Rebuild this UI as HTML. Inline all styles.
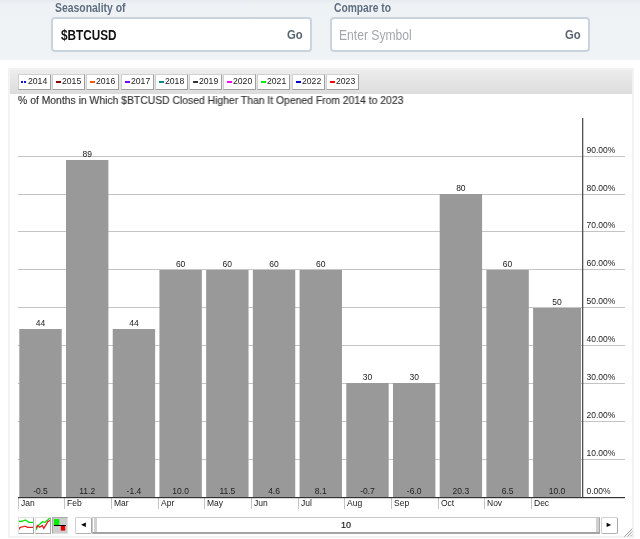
<!DOCTYPE html>
<html><head><meta charset="utf-8">
<style>
html,body{margin:0;padding:0;}
body{width:640px;height:539px;position:relative;overflow:hidden;background:#fff;font-family:"Liberation Sans",sans-serif;}
.t{position:absolute;line-height:1;white-space:nowrap;transform-origin:0 0;}
.top{position:absolute;left:0;top:0;width:640px;height:60px;background:linear-gradient(#e6eaee 0px,#eef2f5 4px,#eff3f6 60px);}
.box{position:absolute;top:17px;height:31px;background:#fff;border:2px solid #c9d4de;border-radius:4px;}
.panel{position:absolute;left:8px;top:68px;width:622px;height:466px;border:2px solid #f2f2f2;background:#fff;}
.legbar{position:absolute;left:10px;top:70px;width:622px;height:24px;background:linear-gradient(#ededed,#dcdcdc);}
.lb{position:absolute;top:74px;width:31px;height:14px;background:#fff;border:1px solid;border-color:#d0d0d0 #a0a0a0 #a0a0a0 #d0d0d0;}
.dot{position:absolute;top:6px;width:2px;height:2px;}
.dash{position:absolute;left:3px;top:6px;width:5px;height:1.7px;}
.lt{position:absolute;left:9px;top:0px;font-size:9.9px;line-height:normal;color:#222;transform:scaleX(0.875);transform-origin:0 0;}
.ib{position:absolute;top:517px;width:14px;height:15px;border:1px solid;border-color:#e0e0e0 #a8a8a8 #a8a8a8 #e0e0e0;background:#fff;overflow:hidden;}
.ib svg{position:absolute;left:-1px;top:-1px;}
.ib.on{background:#cdcdcd;border-color:#a8a8a8 #e0e0e0 #e0e0e0 #a8a8a8;}
.sb{position:absolute;top:517px;width:15px;height:15px;border:1px solid;border-color:#d0d0d0 #a8a8a8 #b0b0b0 #d0d0d0;border-radius:2px;background:#fff;}
.sb svg{position:absolute;left:-1px;top:-1px;}
.track{position:absolute;left:92px;top:517px;width:506px;height:14px;border:1px solid;border-color:#c8c8c8 #a8a8a8 #a4a4a4 #c8c8c8;border-bottom-width:2px;background:#fff;}
.grip{position:absolute;top:0;width:3px;height:14px;background:#d0d0d0;}
.tnum{position:absolute;left:248.3px;top:2px;font-size:9px;font-weight:normal;-webkit-text-stroke:0.2px #222;color:#222;will-change:transform;}
.grz{position:absolute;}
svg.main{position:absolute;left:0;top:0;will-change:transform;}
.gs{will-change:transform;}
.bl{font-family:"Liberation Sans",sans-serif;font-size:8.5px;fill:#222;}
</style></head><body>
<div class="top">
  <div class="box" style="left:51px;width:257px"></div>
  <div class="box" style="left:330px;width:256px"></div>
</div>
<div class="panel"></div>
<div class="legbar"></div>
<div class="lb gs" style="left:18.0px"><span class="dot" style="left:2px;background:#1010d8"></span><span class="dot" style="left:5px;background:#1010d8"></span><span class="lt">2014</span></div><div class="lb gs" style="left:52.2px"><span class="dash" style="background:#8b0000"></span><span class="lt">2015</span></div><div class="lb gs" style="left:86.4px"><span class="dash" style="background:#ff5500"></span><span class="lt">2016</span></div><div class="lb gs" style="left:120.6px"><span class="dash" style="background:#8000ff"></span><span class="lt">2017</span></div><div class="lb gs" style="left:154.8px"><span class="dash" style="background:#008b8b"></span><span class="lt">2018</span></div><div class="lb gs" style="left:189.0px"><span class="dash" style="background:#333333"></span><span class="lt">2019</span></div><div class="lb gs" style="left:223.2px"><span class="dash" style="background:#ff00ff"></span><span class="lt">2020</span></div><div class="lb gs" style="left:257.4px"><span class="dash" style="background:#00ee00"></span><span class="lt">2021</span></div><div class="lb gs" style="left:291.6px"><span class="dash" style="background:#0000cc"></span><span class="lt">2022</span></div><div class="lb gs" style="left:325.8px"><span class="dash" style="background:#ff0000"></span><span class="lt">2023</span></div>
<svg class="main" width="640" height="539" viewBox="0 0 640 539">
<rect x="18" y="459" width="607" height="1" fill="#c4c4c4"/><rect x="18" y="421" width="607" height="1" fill="#c4c4c4"/><rect x="18" y="383" width="607" height="1" fill="#c4c4c4"/><rect x="18" y="345" width="607" height="1" fill="#c4c4c4"/><rect x="18" y="307" width="607" height="1" fill="#c4c4c4"/><rect x="18" y="269" width="607" height="1" fill="#c4c4c4"/><rect x="18" y="231" width="607" height="1" fill="#c4c4c4"/><rect x="18" y="194" width="607" height="1" fill="#c4c4c4"/><rect x="18" y="156" width="607" height="1" fill="#c4c4c4"/><rect x="19.30" y="329" width="42.40" height="168" fill="#999999"/><text x="40.50" y="326" text-anchor="middle" class="bl">44</text><text x="40.50" y="493.6" text-anchor="middle" class="bl">-0.5</text><rect x="18" y="498" width="1" height="11" fill="#c4c4c4"/><text x="21.00" y="506.3" class="bl">Jan</text><rect x="66.01" y="160" width="42.40" height="337" fill="#999999"/><text x="87.21" y="157" text-anchor="middle" class="bl">89</text><text x="87.21" y="493.6" text-anchor="middle" class="bl">11.2</text><rect x="64" y="498" width="1" height="11" fill="#c4c4c4"/><text x="67.00" y="506.3" class="bl">Feb</text><rect x="112.72" y="329" width="42.40" height="168" fill="#999999"/><text x="133.92" y="326" text-anchor="middle" class="bl">44</text><text x="133.92" y="493.6" text-anchor="middle" class="bl">-1.4</text><rect x="111" y="498" width="1" height="11" fill="#c4c4c4"/><text x="114.00" y="506.3" class="bl">Mar</text><rect x="159.43" y="270" width="42.40" height="227" fill="#999999"/><text x="180.63" y="267" text-anchor="middle" class="bl">60</text><text x="180.63" y="493.6" text-anchor="middle" class="bl">10.0</text><rect x="158" y="498" width="1" height="11" fill="#c4c4c4"/><text x="161.00" y="506.3" class="bl">Apr</text><rect x="206.14" y="270" width="42.40" height="227" fill="#999999"/><text x="227.34" y="267" text-anchor="middle" class="bl">60</text><text x="227.34" y="493.6" text-anchor="middle" class="bl">11.5</text><rect x="204" y="498" width="1" height="11" fill="#c4c4c4"/><text x="207.00" y="506.3" class="bl">May</text><rect x="252.85" y="270" width="42.40" height="227" fill="#999999"/><text x="274.05" y="267" text-anchor="middle" class="bl">60</text><text x="274.05" y="493.6" text-anchor="middle" class="bl">4.6</text><rect x="251" y="498" width="1" height="11" fill="#c4c4c4"/><text x="254.00" y="506.3" class="bl">Jun</text><rect x="299.56" y="270" width="42.40" height="227" fill="#999999"/><text x="320.76" y="267" text-anchor="middle" class="bl">60</text><text x="320.76" y="493.6" text-anchor="middle" class="bl">8.1</text><rect x="298" y="498" width="1" height="11" fill="#c4c4c4"/><text x="301.00" y="506.3" class="bl">Jul</text><rect x="346.27" y="383" width="42.40" height="114" fill="#999999"/><text x="367.47" y="380" text-anchor="middle" class="bl">30</text><text x="367.47" y="493.6" text-anchor="middle" class="bl">-0.7</text><rect x="344" y="498" width="1" height="11" fill="#c4c4c4"/><text x="347.00" y="506.3" class="bl">Aug</text><rect x="392.98" y="383" width="42.40" height="114" fill="#999999"/><text x="414.18" y="380" text-anchor="middle" class="bl">30</text><text x="414.18" y="493.6" text-anchor="middle" class="bl">-6.0</text><rect x="391" y="498" width="1" height="11" fill="#c4c4c4"/><text x="394.00" y="506.3" class="bl">Sep</text><rect x="439.69" y="194" width="42.40" height="303" fill="#999999"/><text x="460.89" y="191" text-anchor="middle" class="bl">80</text><text x="460.89" y="493.6" text-anchor="middle" class="bl">20.3</text><rect x="438" y="498" width="1" height="11" fill="#c4c4c4"/><text x="441.00" y="506.3" class="bl">Oct</text><rect x="486.40" y="270" width="42.40" height="227" fill="#999999"/><text x="507.60" y="267" text-anchor="middle" class="bl">60</text><text x="507.60" y="493.6" text-anchor="middle" class="bl">6.5</text><rect x="484" y="498" width="1" height="11" fill="#c4c4c4"/><text x="487.00" y="506.3" class="bl">Nov</text><rect x="533.11" y="308" width="47.89" height="189" fill="#999999"/><text x="557.06" y="305" text-anchor="middle" class="bl">50</text><text x="557.06" y="493.6" text-anchor="middle" class="bl">10.0</text><rect x="531" y="498" width="1" height="11" fill="#c4c4c4"/><text x="534.00" y="506.3" class="bl">Dec</text><rect x="582" y="118" width="1.3" height="380" fill="#505050"/><rect x="18" y="497" width="607" height="1.2" fill="#333"/><text x="586.5" y="493.60" class="bl">0.00%</text><text x="586.5" y="455.73" class="bl">10.00%</text><text x="586.5" y="417.85" class="bl">20.00%</text><text x="586.5" y="379.98" class="bl">30.00%</text><text x="586.5" y="342.10" class="bl">40.00%</text><text x="586.5" y="304.23" class="bl">50.00%</text><text x="586.5" y="266.35" class="bl">60.00%</text><text x="586.5" y="228.47" class="bl">70.00%</text><text x="586.5" y="190.60" class="bl">80.00%</text><text x="586.5" y="152.72" class="bl">90.00%</text>
</svg>

<div class="ib" style="left:18px"><svg width="16" height="17" viewBox="0 0 16 17"><polyline points="0.5,4.2 3,4.5 5,4 7.5,3 9,4 11,5.3 15.5,5.3" fill="none" stroke="#00e000" stroke-width="1.3"/><polyline points="0.5,12.5 2,10.5 4,10 6,9.3 7.5,9.3 9.5,10.3 15.5,10.3" fill="none" stroke="#e02020" stroke-width="1.3"/></svg></div>
<div class="ib" style="left:35px"><svg width="16" height="17" viewBox="0 0 16 17"><polyline points="1.15,12.8 2.8,8.8 4.7,7.3 7.6,4.7 9.9,5.4 12.1,3.6 15.1,0.6" fill="none" stroke="#00e000" stroke-width="1.3"/><polyline points="0.6,11.7 2.45,8.4 4.7,10.2 7.3,8.4 8.8,11.4 10.6,8.4 12.8,4.7 15.4,3.2" fill="none" stroke="#e02020" stroke-width="1.3"/></svg></div>
<div class="ib on" style="left:52px"><svg width="16" height="17" viewBox="0 0 16 17"><rect x="1.9" y="2.1" width="5.4" height="5.9" fill="#00ee00"/><rect x="1.9" y="8" width="12.1" height="1" fill="#000"/><rect x="8.8" y="9" width="4.4" height="4.6" fill="#e00000"/></svg></div>
<div class="sb" style="left:75px"><svg width="17" height="17" viewBox="0 0 17 17"><polygon points="6,7.8 10.8,5.6 10.8,10" fill="#000"/></svg></div>
<div class="track"><div class="grip" style="left:1px"></div><div class="grip" style="right:0px"></div><div class="tnum">10</div></div>
<div class="sb" style="left:601px"><svg width="17" height="17" viewBox="0 0 17 17"><polygon points="10.2,7.9 5.6,5.8 5.6,10" fill="#000"/></svg></div>
<svg class="grz" width="14" height="14" viewBox="0 0 14 14" style="left:622px;top:526px"><line x1="2.4" y1="10.7" x2="10.2" y2="2.8" stroke="#999" stroke-width="1"/><line x1="5.5" y1="10.5" x2="10.2" y2="5.5" stroke="#999" stroke-width="1"/><line x1="8.5" y1="10.2" x2="10.2" y2="8.5" stroke="#aaa" stroke-width="1"/></svg>

<div class="t" style="left:55.00px;top:0.60px;font-size:13px;font-weight:bold;color:#5f6e80;transform:scaleX(0.8);">Seasonality of</div><div class="t" style="left:333.50px;top:0.60px;font-size:13px;font-weight:bold;color:#5f6e80;transform:scaleX(0.79);">Compare to</div><div class="t" style="left:60.50px;top:27.65px;font-size:14px;font-weight:bold;color:#111;transform:scaleX(0.84);">$BTCUSD</div><div class="t" style="left:287.00px;top:27.80px;font-size:13px;font-weight:bold;color:#5a6470;transform:scaleX(0.87);">Go</div><div class="t" style="left:339.00px;top:28.13px;font-size:14.5px;font-weight:normal;color:#a3a8ad;transform:scaleX(0.835);">Enter Symbol</div><div class="t" style="left:565.20px;top:27.80px;font-size:13px;font-weight:bold;color:#5a6470;transform:scaleX(0.87);">Go</div><div class="t" style="left:17.50px;top:95.70px;font-size:10.4px;font-weight:normal;color:#333;transform:scaleX(0.998);will-change:transform;-webkit-text-stroke:0.15px #333;">% of Months in Which $BTCUSD Closed Higher Than It Opened From 2014 to 2023</div>
</body></html>
